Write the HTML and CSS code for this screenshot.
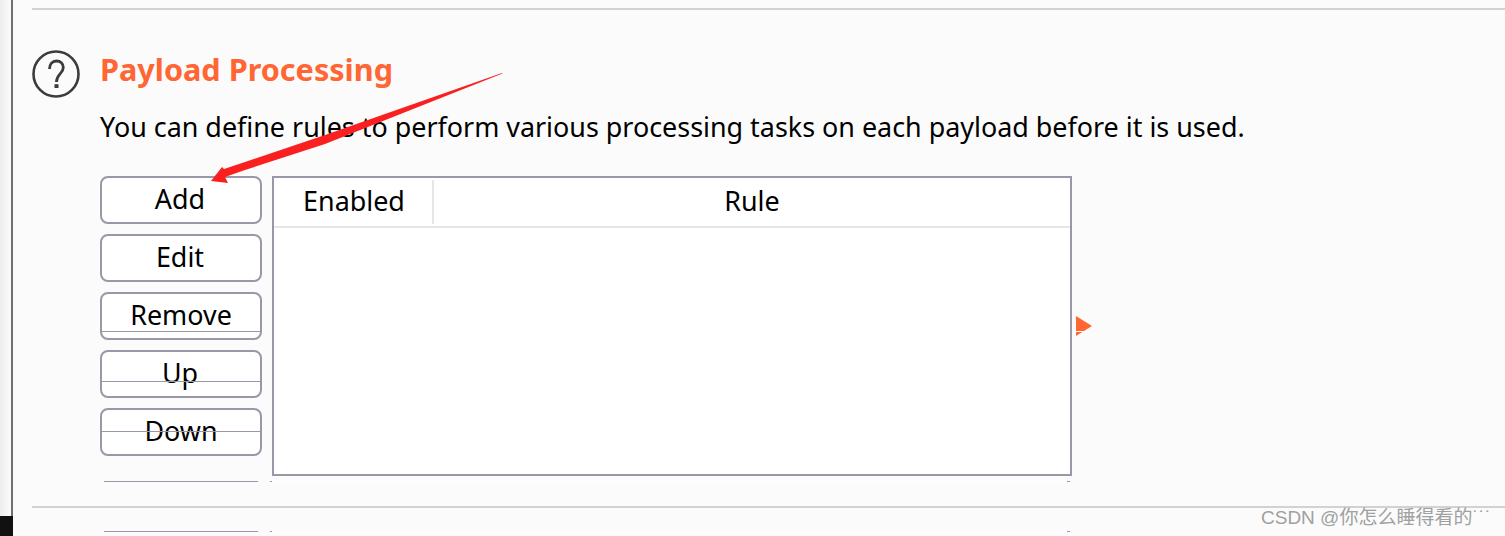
FILE: index.html
```html
<!DOCTYPE html>
<html lang="en">
<head>
<meta charset="utf-8">
<title>Payload Processing</title>
<link rel="stylesheet" href="styles.css">
</head>
<body>
<div class="page">
  <div class="edge"><div class="edge-dark"></div></div>
  <main class="panel">
    <hr class="rule rule-top">
    <section class="section">
      <svg class="help" width="48" height="48" viewBox="0 0 48 48" aria-hidden="true">
        <circle cx="24" cy="24" r="22.500" fill="none" stroke="#3c3c3c" stroke-width="2.600"/>
        <path d="M17.500 19c0-5 3-8 6.800-8 4.200 0 7 2.700 7 6.600 0 6-6.800 6.400-6.800 14.400" fill="none" stroke="#3c3c3c" stroke-width="2.800"/>
        <rect x="22.500" y="34.200" width="4" height="3.800" fill="#3c3c3c"/>
      </svg>
      <div class="content">
        <h2 class="title">Payload Processing</h2>
        <p class="desc">You can define rules to perform various processing tasks on each payload before it is used.</p>
        <div class="editor">
          <div class="buttons">
            <button class="btn">Add</button>
            <button class="btn">Edit</button>
            <button class="btn btn-shift">Remove<span class="glitch glitch-remove"></span></button>
            <button class="btn">Up<span class="glitch glitch-up"></span></button>
            <button class="btn btn-shift">Down<span class="glitch glitch-down"></span></button>
          </div>
          <div class="table">
            <div class="thead">
              <div class="th th-enabled">Enabled</div>
              <div class="th th-rule">Rule</div>
            </div>
          </div>
          <div class="marker"></div>
        </div>
        <div class="tick-row tick-row-a"><span class="tick-long"></span><span class="tick-white"></span></div>
      </div>
    </section>
    <hr class="rule rule-bottom">
    <div class="tick-row tick-row-b"><span class="tick-long"></span><span class="tick-white"></span></div>
  </main>
</div>
<svg class="arrow" width="320" height="130" viewBox="0 0 320 130" aria-hidden="true">
  <path d="M292 3 L292.500 3.500 L115 74 L35 100 L15 107 L18 113 L1 111 L12 97 L14 99 L35 92 L115 65 Z" fill="#fb2020"/>
</svg>
<div class="watermark">CSDN @你怎么睡得看的<span class="dots">˙˙˙</span></div>
</body>
</html>
```
FILE: styles.css
```css
* { box-sizing: border-box; }
html, body { margin: 0; padding: 0; height: 536px; overflow: hidden; }
body { background: #fbfbfb; font-family: "Noto Sans", "Open Sans", sans-serif; color: #000; position: relative; }
.page { display: flex; height: 536px; }
.edge { width: 13px; flex: none; position: relative; background: linear-gradient(90deg, #ededed 0, #fafafa 10px, #fafafa 11px, #6f6f6f 11px, #6f6f6f 13px); }
.edge-dark { position: absolute; left: 0; right: 0; bottom: 0; height: 20px; background: #111; }
.panel { flex: 1; min-width: 0; padding: 8px 0 0 19px; }
.rule { margin: 0; border: 0; height: 2px; background: #d2d2d2; }
.section { display: flex; margin-top: 38px; }
.help { flex: none; margin-right: 20px; margin-top: 2px; }
.content { flex: 1; min-width: 0; }
.title { margin: 0; height: 55px; font-size: 30.600px; line-height: 42px; font-weight: 700; color: #ff6633; }
.desc { margin: 0 0 25px; height: 48px; font-size: 26.900px; line-height: 48px; white-space: nowrap; }
.editor { display: flex; position: relative; width: 972px; height: 300px; }
.buttons { width: 162px; flex: none; display: flex; flex-direction: column; gap: 10px; }
.btn { position: relative; display: block; width: 162px; height: 48px; padding: 0 2px 2px 0; border: 2px solid #9a98a8; border-radius: 8px; background: #fff; font: 400 26.900px/40px "Noto Sans", "Open Sans", sans-serif; color: #000; }
.btn-shift { padding-right: 0; }
.glitch { position: absolute; left: -2px; right: -2px; height: 1px; background: #9a98a8; }
.glitch-remove { top: 37px; }
.glitch-up { top: 29px; }
.glitch-down { top: 21px; }
.table { width: 800px; height: 300px; margin-left: 10px; border: 2px solid #9a98a8; background: #fff; flex: none; }
.thead { display: flex; height: 50px; border-bottom: 2px solid #e6e6e6; padding-top: 2px; }
.th { font-size: 26.900px; line-height: 42px; text-align: center; }
.th-enabled { width: 160px; height: 44px; border-right: 2px solid #e6e6e6; padding-left: 2px; }
.th-rule { flex: 1; }
.marker { position: absolute; left: 976px; top: 140px; width: 16px; height: 20px; background: #ff6633; clip-path: polygon(0 0, 100% 50%, 50% 75%, 0 75%, 0 80%, 40% 80%, 0 100%); }
.tick-row { display: flex; height: 1px; margin-top: 5px; }
.tick-long { width: 154px; margin-left: 4px; background: #9a98a8; height: 1px; }
.tick-white { width: 800px; margin-left: 12px; height: 1px; background: linear-gradient(90deg, #9a98a8 0, #9a98a8 2px, #fff 2px, #fff 797px, #9a98a8 797px); }
.rule-bottom { margin-top: 24px; }
.tick-row-b { margin: 23px 0 0 68px; }
.arrow { position: absolute; left: 210px; top: 70px; }
.watermark { position: absolute; left: 1261px; top: 505px; font: 400 19px/26px "Liberation Sans", "Noto Sans CJK SC", sans-serif; color: #a0a0a0; white-space: nowrap; }
.dots { letter-spacing: 0; }
```
